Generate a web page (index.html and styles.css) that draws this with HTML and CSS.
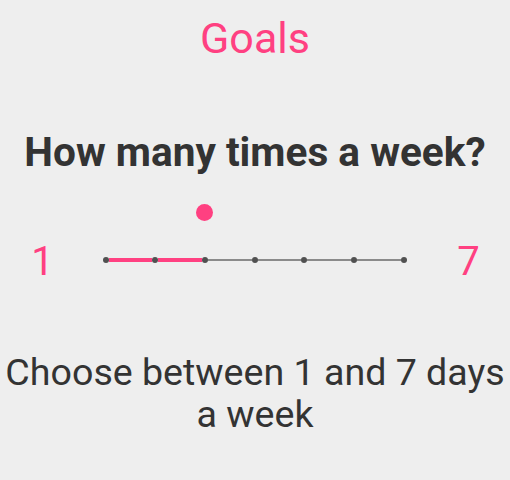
FILE: index.html
```html
<!DOCTYPE html>
<html>
<head>
<meta charset="utf-8">
<link rel="stylesheet" href="styles.css">
</head>
<body>
<main class="screen">
  <h1 class="title">Goals</h1>
  <h2 class="question">How many times a week?</h2>
  <div class="slider-row">
    <span class="bound">1</span>
    <div class="slider">
      <span class="dot"></span><span class="seg active"></span>
      <span class="dot"></span><span class="seg active"></span>
      <span class="dot current"><span class="thumb"></span></span><span class="seg"></span>
      <span class="dot"></span><span class="seg"></span>
      <span class="dot"></span><span class="seg"></span>
      <span class="dot"></span><span class="seg"></span>
      <span class="dot"></span>
    </div>
    <span class="bound">7</span>
  </div>
  <p class="desc">Choose between 1 and 7 days a week</p>
</main>
</body>
</html>
```
FILE: styles.css
```css
html, body {
  margin: 0;
  padding: 0;
  background: #eeeeee;
}
.screen {
  width: 510px;
  height: 480px;
  display: flex;
  flex-direction: column;
  align-items: center;
  font-family: Roboto, "Liberation Sans", sans-serif;
}
.title {
  margin: 13px 0 0;
  font-size: 43px;
  font-weight: 400;
  line-height: 50px;
  color: #ff4081;
}
.question {
  margin: 66px 0 0;
  font-size: 40.6px;
  font-weight: 700;
  line-height: 47px;
  color: #333333;
}
.slider-row {
  width: 510px;
  margin-top: 61px;
  display: grid;
  grid-template-columns: 85px 342px 83px;
  align-items: center;
  height: 50px;
}
.bound {
  text-align: center;
  font-size: 40px;
  line-height: 50px;
  color: #ff4081;
}
.slider {
  margin: 0 20.5px 4px 17.5px;
  display: flex;
  align-items: center;
  height: 6px;
}
.dot {
  position: relative;
  flex: none;
  width: 6px;
  height: 6px;
  border-radius: 50%;
  background: #505050;
}
.seg {
  flex: 1;
  height: 1.5px;
  background: #8a8a8a;
}
.seg.active {
  height: 3.5px;
  background: #ff4081;
}
.thumb {
  position: absolute;
  left: 50%;
  top: 50%;
  width: 17px;
  height: 17px;
  margin: -56.5px 0 0 -8.5px;
  border-radius: 50%;
  background: #ff4081;
}
.desc {
  margin: 64px 0 0;
  width: 510px;
  text-align: center;
  font-size: 37.6px;
  line-height: 42px;
  color: #333333;
}
```
